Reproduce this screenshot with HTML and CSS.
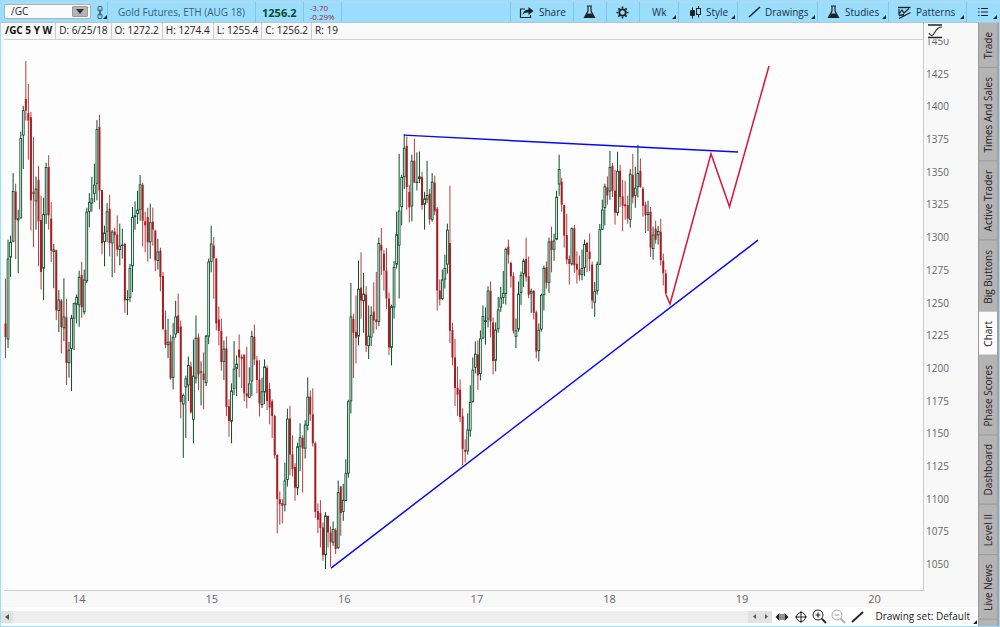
FILE: index.html
```html
<!DOCTYPE html>
<html lang="en">
<head>
<meta charset="utf-8">
<title>/GC Chart</title>
<link rel="stylesheet" href="styles.css">
</head>
<body>
<div class="app">
  <header class="toolbar">
    <div class="symbol">
      <input class="symbol-input" type="text" value="/GC" aria-label="Symbol">
      <button class="symbol-drop" aria-label="Symbol list"><svg width="8" height="5"><path d="M0 0h8L4 5z" fill="#333"/></svg></button>
    </div>
    <button class="link-btn corner" aria-label="Link"><svg width="8" height="13" viewBox="0 0 8 13" fill="none" stroke="#3b5766"><rect x="2" y=".5" width="4" height="4.500" rx="1"/><path d="M4 3.500v6" stroke-width="1.500"/><rect x="2" y="8" width="4" height="4.500" rx="1"/></svg></button>
    <span class="name">Gold Futures, ETH (AUG 18)</span>
    <span class="last">1256.2</span>
    <span class="change"><span>-3.70</span><span>-0.29%</span></span>
    <nav class="tools">
      <button class="tool share"><svg width="15" height="13" viewBox="0 0 15 13"><path d="M6 3H1.500v8.500h10V9" fill="none" stroke="#222" stroke-width="1.200"/><path d="M9.500 1l5 4-5 4V6.500C6.500 6.300 4.800 7 3.500 9 4 5.500 6 3.500 9.500 3.400z" fill="#222"/></svg>Share</button>
      <button class="tool flask" aria-label="Edit studies"><svg width="13" height="14" viewBox="0 0 13 14"><path d="M4 1h5M5 1v5L1.500 12.500h10L8 6V1" fill="none" stroke="#222" stroke-width="1.200"/><path d="M4 8.500h5l2.500 4.300h-10z" fill="#222"/></svg></button>
      <button class="tool gear" aria-label="Settings"><svg width="13" height="13" viewBox="0 0 13 13" fill="none" stroke="#222"><circle cx="6.500" cy="6.500" r="3.200" stroke-width="1.800"/><path d="M6.500 .5v2M6.500 10.500v2M.5 6.500h2M10.500 6.500h2M2.300 2.300l1.400 1.400M9.300 9.300l1.400 1.400M2.300 10.700l1.400-1.400M9.300 3.700l1.400-1.400" stroke-width="1.700"/></svg></button>
      <button class="tool wk corner">Wk</button>
      <button class="tool style corner"><svg width="11" height="13" viewBox="0 0 11 13"><path d="M2.500 1.500v11" stroke="#222"/><rect x="0" y="4" width="5" height="6" rx="1" fill="#222"/><path d="M8.500 0v2.500M8.500 8.500v3" stroke="#222"/><rect x="6.500" y="2.500" width="4" height="6" fill="none" stroke="#222"/></svg>Style</button>
      <button class="tool drawings corner"><svg width="13" height="12" viewBox="0 0 13 12"><path d="M1 11L12 1" stroke="#222" stroke-width="1.600"/></svg>Drawings</button>
      <button class="tool studies corner"><svg width="13" height="14" viewBox="0 0 13 14"><path d="M4 1h5M5 1v5L1.500 12.500h10L8 6V1" fill="none" stroke="#222" stroke-width="1.200"/><path d="M4 8.500h5l2.500 4.300h-10z" fill="#222"/></svg>Studies</button>
      <button class="tool patterns corner"><svg width="13" height="13" viewBox="0 0 13 13" fill="none" stroke="#222"><path d="M0 1.500h12.500" stroke-width="1.400"/><path d="M1 3v5l3-4 2 3 5-4.500" stroke-width="1.200"/><path d="M1 12.500l11.500-6M1 9.500l5-1" stroke-width="1.300"/></svg>Patterns</button>
      <button class="tool menu corner" aria-label="Menu"><svg width="10" height="10" viewBox="0 0 10 10"><path d="M0 1.500h1.500M3 1.500h7M0 5h1.500M3 5h7M0 8.500h1.500M3 8.500h7" stroke="#222" stroke-width="1.200"/></svg></button>
    </nav>
  </header>
  <div class="workspace">
    <main class="panel">
      <div class="chart">
        <section class="plot">
          <div class="info">
            <b>/GC 5 Y W</b><span>D: 6/25/18</span><span>O: 1272.2</span><span>H: 1274.4</span><span>L: 1255.4</span><span>C: 1256.2</span><span>R: 19</span>
          </div>
          <svg class="canvas" viewBox="4 40 919 551" preserveAspectRatio="none" role="img" aria-label="Gold weekly candles">
            <g id="candles"></g>
            <g fill="none" stroke-width="1.500">
              <path d="M404 135.300L738 152.300M331 569L758 240.500" stroke="#0808f8"/>
              <path d="M666 295l4 9.500L711 154l18.500 53L769 66" stroke="#d8143a"/>
            </g>
          </svg>
          <div class="years"><span>14</span><span>15</span><span>16</span><span>17</span><span>18</span><span>19</span><span>20</span></div>
        </section>
        <aside class="axis">
          <div class="axis-head"><svg width="15" height="15" viewBox="0 0 15 15" fill="none" stroke="#222"><path d="M0 1h14M0 13.500h14" stroke-width="1.600"/><path d="M1 9c2 4 4 3 6-1s4-5 7-5" stroke="#333" stroke-width="1.200"/></svg></div>
          <div class="prices"><span>1450</span><span>1425</span><span>1400</span><span>1375</span><span>1350</span><span>1325</span><span>1300</span><span>1275</span><span>1250</span><span>1225</span><span>1200</span><span>1175</span><span>1150</span><span>1125</span><span>1100</span><span>1075</span><span>1050</span></div>
        </aside>
      </div>
      <footer class="bottom">
        <div class="scroll">
          <button aria-label="Scroll to start"><svg width="4" height="6"><path d="M4 0v6L0 3z" fill="#555"/></svg></button>
          <span class="track"></span>
          <button aria-label="Scroll left"><svg width="3" height="5"><path d="M3 0v5L0 2.500z" fill="#555"/></svg></button>
          <button aria-label="Scroll right"><svg width="3" height="5"><path d="M0 0v5l3-2.500z" fill="#555"/></svg></button>
        </div>
        <div class="zoom">
          <button aria-label="Pan"><svg width="14" height="14" viewBox="0 0 14 14" fill="#222"><path d="M4.500 3v8L.5 7zM9.500 3v8l4-4z"/><path d="M5.500 4h1v6h-1zM7.500 4h1v6h-1z"/></svg></button>
          <button aria-label="Crosshair"><svg width="14" height="14" viewBox="0 0 14 14" fill="none" stroke="#222"><circle cx="7" cy="7" r="4.500"/><path d="M7 1v12M1 7h12"/></svg></button>
          <button aria-label="Zoom in"><svg width="15" height="15" viewBox="0 0 15 15" fill="none" stroke="#222"><circle cx="6" cy="6" r="5"/><path d="M3.500 6h5M6 3.500v5" stroke-width="1.200"/><path d="M9.700 9.700L14 14" stroke-width="1.800"/></svg></button>
          <button aria-label="Zoom out"><svg width="15" height="15" viewBox="0 0 15 15" fill="none" stroke="#aaa"><circle cx="6" cy="6" r="5"/><path d="M3.500 6h5" stroke-width="1.200"/><path d="M9.700 9.700L14 14" stroke-width="1.800"/></svg></button>
          <button aria-label="Draw line"><svg width="13" height="12" viewBox="0 0 13 12"><path d="M1 11L12 1" stroke="#222" stroke-width="1.800"/></svg></button>
        </div>
        <button class="set corner">Drawing set: Default</button>
      </footer>
    </main>
    <nav class="tabs">
      <button>Trade</button><button>Times And Sales</button><button>Active Trader</button><button>Big Buttons</button><button class="on">Chart</button><button>Phase Scores</button><button>Dashboard</button><button>Level II</button><button>Live News</button>
    </nav>
  </div>
</div>
<script src="chart.js"></script>
</body>
</html>
```
FILE: styles.css
```css
* { box-sizing: border-box; }
html, body { height: 100%; margin: 0; }
body { font-family: "Open Sans", "Noto Sans", sans-serif; font-size: 10px; line-height: 15px; color: #222; }
button { font: inherit; color: inherit; border: 0; background: none; padding: 0; margin: 0; white-space: nowrap; }
svg { flex: none; }
.app { height: 100vh; display: flex; flex-direction: column; background: #99ddff; padding: 0 1px 1px; overflow: hidden; }

.toolbar { flex: none; height: 23px; display: flex; align-items: stretch; padding-top: 2px; border-bottom: 1px solid #b9c3c8; background: linear-gradient(#99ddff 2px, #c5d3da 2px, #c5d3da 3px, #99ddff 3px); color: #1c323e; }
.symbol { width: 87px; height: 15px; margin: 2px 0 0 3px; display: flex; align-items: center; background: #fbfbfb; border: 1px solid #b0b4b6; border-radius: 2px; padding-right: 2px; }
.symbol-input { flex: 1; min-width: 0; border: 0; background: none; padding: 0 0 0 6px; font: inherit; color: #222; outline: 0; height: 13px; }
.symbol-drop { width: 16px; height: 11px; background: #b3b3b3; border: 1px solid #999; border-radius: 1px; display: flex; align-items: center; justify-content: center; }
.link-btn { width: 16px; padding-left: 5px; display: flex; align-items: center; }
.corner { position: relative; }
.corner::after { content: ""; position: absolute; right: 2px; bottom: 3px; border: 2px solid #222; border-left-color: transparent; border-top-color: transparent; }
.link-btn.corner::after { right: 0; }
.name, .last, .change { display: flex; align-items: center; border-left: 1px solid #86c6e5; }
.name { padding: 0 10px; color: #3b5f72; }
.last { padding: 0 6px; font-weight: 700; font-size: 11px; color: #084a2c; }
.change { padding: 0 6px; border-right: 1px solid #86c6e5; flex-direction: column; align-items: flex-start; justify-content: center; font-size: 8px; line-height: 9px; color: #a02440; }
.tools { margin-left: auto; display: flex; }
.tool { border-left: 1px solid #86c6e5; display: flex; align-items: center; gap: 5px; padding-left: 8px; }
.share { width: 63px; } .flask, .gear { width: 33px; padding-left: 9px; } .wk { width: 39px; padding-left: 12px; }
.style { width: 59px; padding-left: 11px; } .drawings { width: 80px; padding-left: 10px; gap: 4px; }
.studies { width: 71px; padding-left: 9px; } .patterns { width: 78px; padding-left: 9px; } .menu { width: 33px; padding-left: 11px; }

.workspace { flex: 1; min-height: 0; display: flex; }
.panel { flex: 1; min-width: 0; display: flex; flex-direction: column; background: #fff; }
.chart { flex: 1; min-height: 0; display: flex; background: #f8f8f8; padding-left: 3px; }
.plot { flex: 1; min-width: 0; display: flex; flex-direction: column; }
.info { flex: none; height: 17px; display: flex; border-bottom: 1px solid #d0d0d0; border-right: 1px solid #bbb; background: #f9f9f9; }
.info > * { padding: 0 3px; border-right: 1px solid #ccc; white-space: nowrap; }
.info b { padding: 0 3px 0 1px; color: #111; }
.info span:last-child { border-right: 0; }
.canvas { flex: 1; min-height: 0; width: 100%; display: block; background: #fdfdfd; border: solid #ccc; border-width: 0 1px 1px 0; }
.years { flex: none; height: 16px; display: flex; overflow: hidden; padding-left: 9px; font-size: 11px; color: #666; }
.years span { flex: 0 0 14.55%; text-align: center; }
.axis { width: 54px; flex: none; display: flex; flex-direction: column; padding: 0 0 35px; color: #666; }
.axis-head { flex: none; height: 16px; padding: 1px 0 0 4px; background: #f8f8f8; position: relative; z-index: 1; }
.prices { flex: 1; margin-top: -5px; display: flex; flex-direction: column; justify-content: space-between; padding-left: 2px; }

.bottom { flex: none; height: 19px; display: flex; align-items: center; background: #fff; }
.scroll { flex: 1; display: flex; height: 12px; background: #eee; }
.scroll button { width: 12px; background: #e2e2e2; display: flex; align-items: center; justify-content: center; }
.track { flex: 1; }
.zoom { display: flex; padding: 0 7px 0 2px; gap: 4px; }
.zoom button { width: 15px; display: flex; justify-content: center; align-items: center; }
.set { height: 17px; padding: 0 8px 0 3px; }
.set.corner::after { right: 1px; bottom: 1px; }

.tabs { width: 21px; flex: none; display: flex; flex-direction: column; background: #b4b4b4; border-left: 1px solid #999; border-right: 2px solid #a2a2a2; }
.tabs button { writing-mode: vertical-rl; transform: rotate(180deg); width: 18px; padding: 8px 0 9px; line-height: 18px; border-top: 1px solid #999; text-align: left; }
.tabs .on { background: #fbfbfb; }
.candle-up { fill: #fdfdfd; stroke: #0a4f2b; stroke-width: .9; }
.wick-up { fill: #0a4f2b; }
.candle-down, .wick-down { fill: #a81c22; }
.wick-down { opacity: .85; }
```
FILE: chart.js
```js
// Bars: direction, high, body top, body bottom, low, in thirds of a unit below each block's top.
const blocks = [
  { top: 50, bars: `r687 822 863 926,g570 627 870 896,g558 577 624 682,g370 424 576 578,r402 426 510 628,g480 506 512 671,g246 265 506 506,g168 181 257 358,r33 147 182 212,r102 190 212 330,r186 202 452 542,r262 426 433 593,g380 417 455 540,r348 390 515 650,r438 511 667 720,g444 493 657 752,g339 352 495 523,r316 352 497 540,r457 507 603 637,g583 600 607 716,r600 602 783 812,g722 750 784 848,r748 753 833 912,g686 801 836 875,r748 804 941 1007,g877 901 941 985,g796 805 899 1025,g759 761 807 902,g735 742 765 822,g663 682 767 832,r637 676 773 805,g660 690 788 795,g474 486 695 700,g430 457 486 533,g381 446 461 486,g342 405 432 457,g211 238 402 452,r195 231 423 479,r420 421 581 614,g528 548 577 650,g460 485 546 577,r435 477 580 620,g541 546 581 683,r534 546 557 670,r497 555 600 620,g522 588 601 647,g537 585 587 627,r579 583 752 790,g722 748 752 797,g643 655 745 757,g472 502 650 727,g455 497 502 540,g423 480 493 523,g376 404 480 513,r399 405 513 590,r486 515 527 608,r474 502 578 636,g462 518 578 627,r474 516 540 588,r540 543 632 665,g567 606 634 660,r594 603 682 725,r667 679 839 841,r783 841 886 896,g808 877 887 926` },
  { top: 170, bars: `r496 516 627 631,g460 502 625 660,g394 441 495 505,r372 438 490 490,r453 471 698 747,g673 677 705 866,g619 627 654 806,g561 587 648 695,r577 591 729 733,g510 619 751 822,g438 505 627 642,r492 504 615 662,g576 606 608 708,r549 612 632 720,g496 499 641 650,g267 276 501 524,g168 222 276 308,r202 228 266 388,r265 267 462 483,r411 450 484 528,r447 484 578 604,g513 538 577 632,r501 537 713 740,r690 711 755 803,g642 663 757 822,g515 598 658 677,g558 583 598 680,r495 540 564 624,r555 562 568 656,r555 556 672 695,r532 672 681 717,g594 642 685 686,g484 500 636 680,r465 502 570 587,r560 573 632 672,r572 631 702 741,g625 666 707 716,g570 591 669 704,r588 595 695 722,r640 659 715 765,r690 696 740 806,r736 740 858 868,r855 857 990 1093,r967 990 1005 1067,r990 1002 1010 1063,g880 934 1008 1027,g718 748 932 952,r710 748 856 918,r798 855 900 922,r882 893 955 995,g820 831 957 978,g762 804 832 905,r798 806 838 970,g753 766 838 868,g624 682 769 783,r663 682 735 755,r657 735 822 832,r817 822 1028 1046,r1003 1026 1052 1092,r993 1032 1077 1135,r1060 1075 1158 1175,g1029 1039 1158 1200` },
  { top: 120, bars: `r1190 1190 1240 1285,r1222 1240 1270 1343,g1207 1230 1270 1280,r1227 1233 1290 1305,g1084 1119 1286 1290,r1101 1102 1182 1250,g1094 1142 1178 1205,g1020 1062 1145 1145,g841 846 1063 1075,g490 591 846 882,r583 598 640 776,r528 637 655 732,g423 508 651 678,r398 504 543 598,g460 522 545 640,r500 525 678 698,g558 649 680 719,g561 586 654 680,r488 576 603 642,r457 600 608 630,g354 370 607 620,r325 376 393 466,r391 402 453 513,r385 453 537 568,r519 537 684 707,g555 560 685 738,g424 442 564 597,g276 344 435 447,g102 273 378 537,g165 172 262 317,g43 84 172 208,r50 78 202 270,r195 217 263 308,g105 123 260 305,r57 123 188 190,g98 186 188 212,g95 170 178 190,r156 172 256 270,g216 236 255 330,g123 226 240 250,r208 222 299 315,g160 186 300 306,r168 189 275 286,r262 267 513 573,r480 513 540 558,g450 480 538 542,g405 445 480 507,g312 330 435 462,r198 370 634 671,r610 632 714 738,r658 714 806 860,r741 805 826 890,r780 811 893 908,r867 891 990 1037,r960 992 998 1030,g882 931 996 1006,g798 848 934 952,g714 751 848 850,g666 703 745 762,r663 705 768 812,g633 657 764 783,g558 590 657 658,g564 602 607 675,g500 513 600 624,r486 514 606 654,r594 609 725 765,g609 630 724 756,g532 570 629 640,g502 534 564 577,g454 520 535 553,g384 388 523 555,r360 381 405 432,r426 430 470 504,r458 469 634 642,g597 633 652 686,g486 522 630 637,g456 466 520 556,g417 423 464 502,r354 418 473 486,r411 470 526 536,g507 514 522 580,r511 514 580 600,r573 578 696 717,g612 631 695 726,g522 526 630 636,g438 445 526 573,r426 443 490 507,g354 366 490 520,r321 363 391 458,g342 363 390 424,g213 231 360 362,g105 148 194 228,r175 186 255 276,r255 256 348 384,r282 346 420 434` },
  { top: 130, bars: `r378 388 403 465,g293 296 404 408,r286 296 407 430,r365 403 420 462,r378 420 437 453,g360 415 436 452,g330 343 415 440,r336 340 367 428,r312 366 388 425,r396 405 513 538,g457 485 519 562,g396 403 485 495,g283 299 405 406,g210 240 300 300,g162 170 235 287,r140 173 197 225,g63 112 185 210,r99 108 183 202,r120 183 249 285,g66 124 250 258,r105 123 202 232,r150 200 228 305,r153 224 230 270,r198 226 267 282,g118 132 270 294,r72 135 203 221,g111 174 198 234,g45 130 172 203,r86 123 172 174,r171 177 228 261,r216 225 257 310,g213 248 256 304,r232 246 354 382,g291 315 358 390,r273 297 330 342,g289 304 317 345,r267 306 392 408,r372 393 430 468,r420 432 492 495` }
];

const layer = document.getElementById("candles");
const first = 5.5;
const last = 665.8;
const all = blocks.flatMap(({ top, bars }) => bars.split(",").map(bar => ({
  up: bar[0] === "g",
  y: bar.slice(1).split(" ").map(v => top + v / 3)
})));
const step = (last - first) / (all.length - 1);

function rect(x, y, width, height, name) {
  const el = document.createElementNS("http://www.w3.org/2000/svg", "rect");
  Object.entries({ x, y, width, height, class: name }).forEach(([k, v]) => el.setAttribute(k, v));
  layer.append(el);
}

all.forEach(({ up, y: [high, top, bottom, low] }, i) => {
  const x = first + i * step;
  const kind = up ? "up" : "down";
  rect(x - 0.5, high, 1, Math.max(low - high, 1), "wick-" + kind);
  if (up) rect(x - 0.9, top + 0.4, 1.8, Math.max(bottom - top - 0.8, 0.4), "candle-up");
  else rect(x - 1, top, 2, Math.max(bottom - top, 1), "candle-down");
});
```
